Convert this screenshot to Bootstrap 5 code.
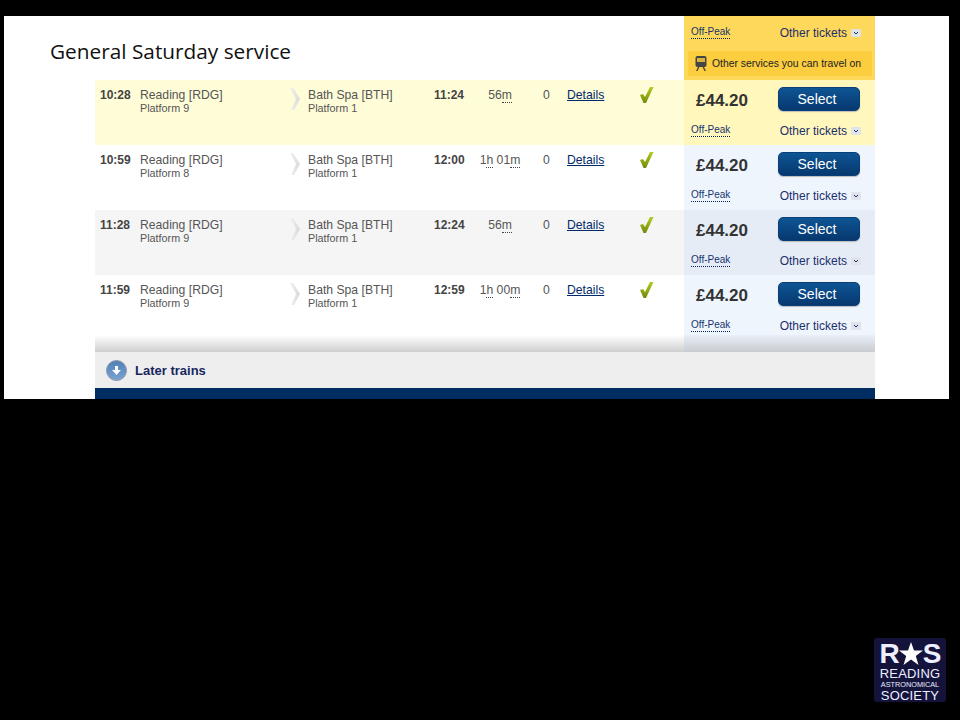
<!DOCTYPE html>
<html lang="en">
<head>
<meta charset="UTF-8">
<title>General Saturday service</title>
<link href="https://cdn.jsdelivr.net/npm/bootstrap@5.3.3/dist/css/bootstrap.min.css" rel="stylesheet">
<style>
html,body{height:720px;overflow:hidden}
body{background:#000;font-family:"Liberation Sans",Arial,sans-serif;color:#555}
.slide{margin:16px 0 0 4px;width:945px;height:383px;background:#fff;overflow:hidden}
.sheet{margin-left:91px;width:780px}
.head{height:64px}
.slide-title{font-family:"Open Sans",sans-serif;font-size:20.8px;color:#111;margin:23px 0 0 -45px;line-height:24px}
.fare-head{width:191px;background:#fdd85a;padding:8px 3px 0 7px}
.other-box{background:#fbcd3f;height:25px;margin:9px 0 0 -3px;font-size:10.4px;color:#222;border-radius:2px;padding-left:7px;gap:5px}
.fare-links{font-size:12px;color:#1d2f6b;height:18px}
.peak{font-size:10px;color:#17346f;border-bottom:1px dotted #00205f;line-height:12px;margin-top:-2px}
.more{gap:4px;margin-right:11px}
.train{height:65px}
.train-info{width:589px;display:grid;grid-template-columns:45px 150px 18px 126px 40px 52px 41px 73px 44px;padding-top:8px;font-size:12.2px;line-height:14px;align-content:start}
.tm{font-weight:700;font-size:12px;color:#444;padding-left:5px}
.arr{padding-left:0}
.plat{font-size:10.8px;line-height:13px;color:#555}
.abbr{border-bottom:1px dotted #444}
.dets{color:#002a6b;text-decoration:underline}
.tick{margin:-1px 0 0 -1px}
.fare-cell{width:191px;padding:7px 3px 0 7px;background:#eef5fd}
.now .train-info{background:#fffcd8}
.now .fare-cell{background:#fff7bb}
.alt .train-info{background:#f5f5f5}
.alt .fare-cell{background:#e5ecf6}
.price{font-size:17px;font-weight:700;color:#333;margin-left:5px;margin-top:4px;line-height:20px}
.sel-btn{width:82px;height:24px;margin-right:12px;padding:0 4px 0 0;font-size:14px;line-height:22px;color:#fff;background:linear-gradient(#0e5594,#06386f);border:1px solid #0a3e78;border-radius:5px;box-shadow:0 1px 1px #bbb}
.sel-btn:hover{color:#fff;background:#06386f}
.fare-cell .fare-links{margin-top:11px}
.fade-row{height:17px;margin-top:-5px;background:linear-gradient(#fff,#cfcfcf)}
.fade-row>div:last-child{width:191px;background:linear-gradient(#e8eff8,#c9ccd0)}
.later{height:36px;background:#eee;font-size:13px;font-weight:700;color:#17285f;padding:1px 0 0 11px;gap:8px}
.navy{height:11px;background:#002e63}
.ras{width:72px;height:64px;margin:239px 0 0 874px;background:#13133c;border-radius:3px;color:#eef;text-align:center;line-height:1;padding-top:2px}
.ras-top{font-size:28px;line-height:28px;font-weight:700;height:28px;letter-spacing:-1px}
.ras-big{font-size:13px;line-height:12px;letter-spacing:.2px}
.ras-small{font-size:7.3px;line-height:8px;margin:1px 0}
</style>
</head>
<body>
<div class="slide">
  <div class="sheet">
    <div class="head d-flex justify-content-between">
      <h1 class="slide-title fw-normal">General Saturday service</h1>
      <div class="fare-head">
        <div class="fare-links d-flex justify-content-between align-items-center">
          <span class="peak">Off-Peak</span>
          <span class="more d-flex align-items-center">Other tickets
            <svg width="10" height="8" viewBox="0 0 10 8"><rect width="10" height="8" rx="1.5" fill="#dfe3ea"/><path d="M3 3l2 2 2-2" fill="none" stroke="#1d2f6b"/></svg></span>
        </div>
        <div class="other-box d-flex align-items-center">
          <svg width="12" height="15" viewBox="0 0 12 15"><rect x=".5" y="0" width="11" height="11" rx="2" fill="#444"/><rect x="2" y="2" width="8" height="4" fill="#d9b23c"/><path d="M3 11l-2 4h1.5l2-4zM9 11l2 4H9.500l-2-4z" fill="#444"/></svg>
          Other services you can travel on
        </div>
      </div>
    </div>
  </div>
  <div class="sheet" id="trains"></div>
  <div class="sheet">
    <div class="fade-row d-flex justify-content-end"><div></div></div>
    <div class="later d-flex align-items-center">
      <svg width="21" height="21" viewBox="0 0 21 21"><defs><linearGradient id="ball" x1="0" y1="0" x2="0" y2="1"><stop offset="0" stop-color="#4f7fb8"/><stop offset="1" stop-color="#7ba3d2"/></linearGradient></defs><circle cx="10.500" cy="10.500" r="10" fill="url(#ball)" stroke="#8a97a8"/><path d="M9 6h3v4h3l-4.500 5L6 10h3z" fill="#fff"/></svg>
      Later trains
    </div>
    <div class="navy"></div>
  </div>
</div>
<div class="ras">
  <div class="ras-top d-flex justify-content-center align-items-center">R<svg width="24" height="24" viewBox="0 0 24 24"><path d="M12 0l3 8.500h9l-7.200 5.400 2.700 9L12 17.500 4.500 23l2.700-9L0 8.500h9z" fill="#fff"/></svg>S</div>
  <div class="ras-big">READING</div>
  <div class="ras-small">ASTRONOMICAL</div>
  <div class="ras-big">SOCIETY</div>
</div>
<script>
const trains=[
  ["10:28","Platform 9","11:24",'56<span class="abbr">m</span>',"now"],
  ["10:59","Platform 8","12:00",'1<span class="abbr">h</span> 01<span class="abbr">m</span>',""],
  ["11:28","Platform 9","12:24",'56<span class="abbr">m</span>',"alt"],
  ["11:59","Platform 9","12:59",'1<span class="abbr">h</span> 00<span class="abbr">m</span>',""]
]
const box=document.getElementById("trains")
trains.forEach((t,i)=>{
  const row=document.createElement("div")
  row.className="train d-flex "+t[4]
  row.innerHTML=`
  <div class="train-info">
    <div class="tm">${t[0]}</div>
    <div>Reading [RDG]<div class="plat">${t[1]}</div></div>
    <div><svg width="10" height="22" viewBox="0 0 10 22"><defs><linearGradient id="chev${i}"><stop offset="0" stop-color="#f2f2ee"/><stop offset="1" stop-color="#d8d8d4"/></linearGradient></defs><path d="M0 0h3l7 11-6 11H1l5-11z" fill="url(#chev${i})"/></svg></div>
    <div>Bath Spa [BTH]<div class="plat">Platform 1</div></div>
    <div class="tm arr">${t[2]}</div>
    <div class="text-center">${t[3]}</div>
    <div class="text-center">0</div>
    <div><span class="dets">Details</span></div>
    <div><svg class="tick" width="15" height="16" viewBox="0 0 15 16"><defs><linearGradient id="tick${i}" x1="0" y1="0" x2="0" y2="1"><stop offset="0" stop-color="#b5cc1e"/><stop offset="1" stop-color="#6f8a0c"/></linearGradient></defs><path d="M1 8l3-1 2 3L11 0h3.500L7 16H4.500z" fill="url(#tick${i})"/></svg></div>
  </div>
  <div class="fare-cell">
    <div class="d-flex justify-content-between">
      <span class="price">£44.20</span>
      <button type="button" class="btn sel-btn">Select</button>
    </div>
    <div class="fare-links d-flex justify-content-between align-items-center">
      <span class="peak">Off-Peak</span>
      <span class="more d-flex align-items-center">Other tickets
        <svg width="10" height="8" viewBox="0 0 10 8"><rect width="10" height="8" rx="1.500" fill="#dfe3ea"/><path d="M3 3l2 2 2-2" fill="none" stroke="#1d2f6b"/></svg></span>
    </div>
  </div>`
  box.appendChild(row)
})
</script>
</body>
</html>
